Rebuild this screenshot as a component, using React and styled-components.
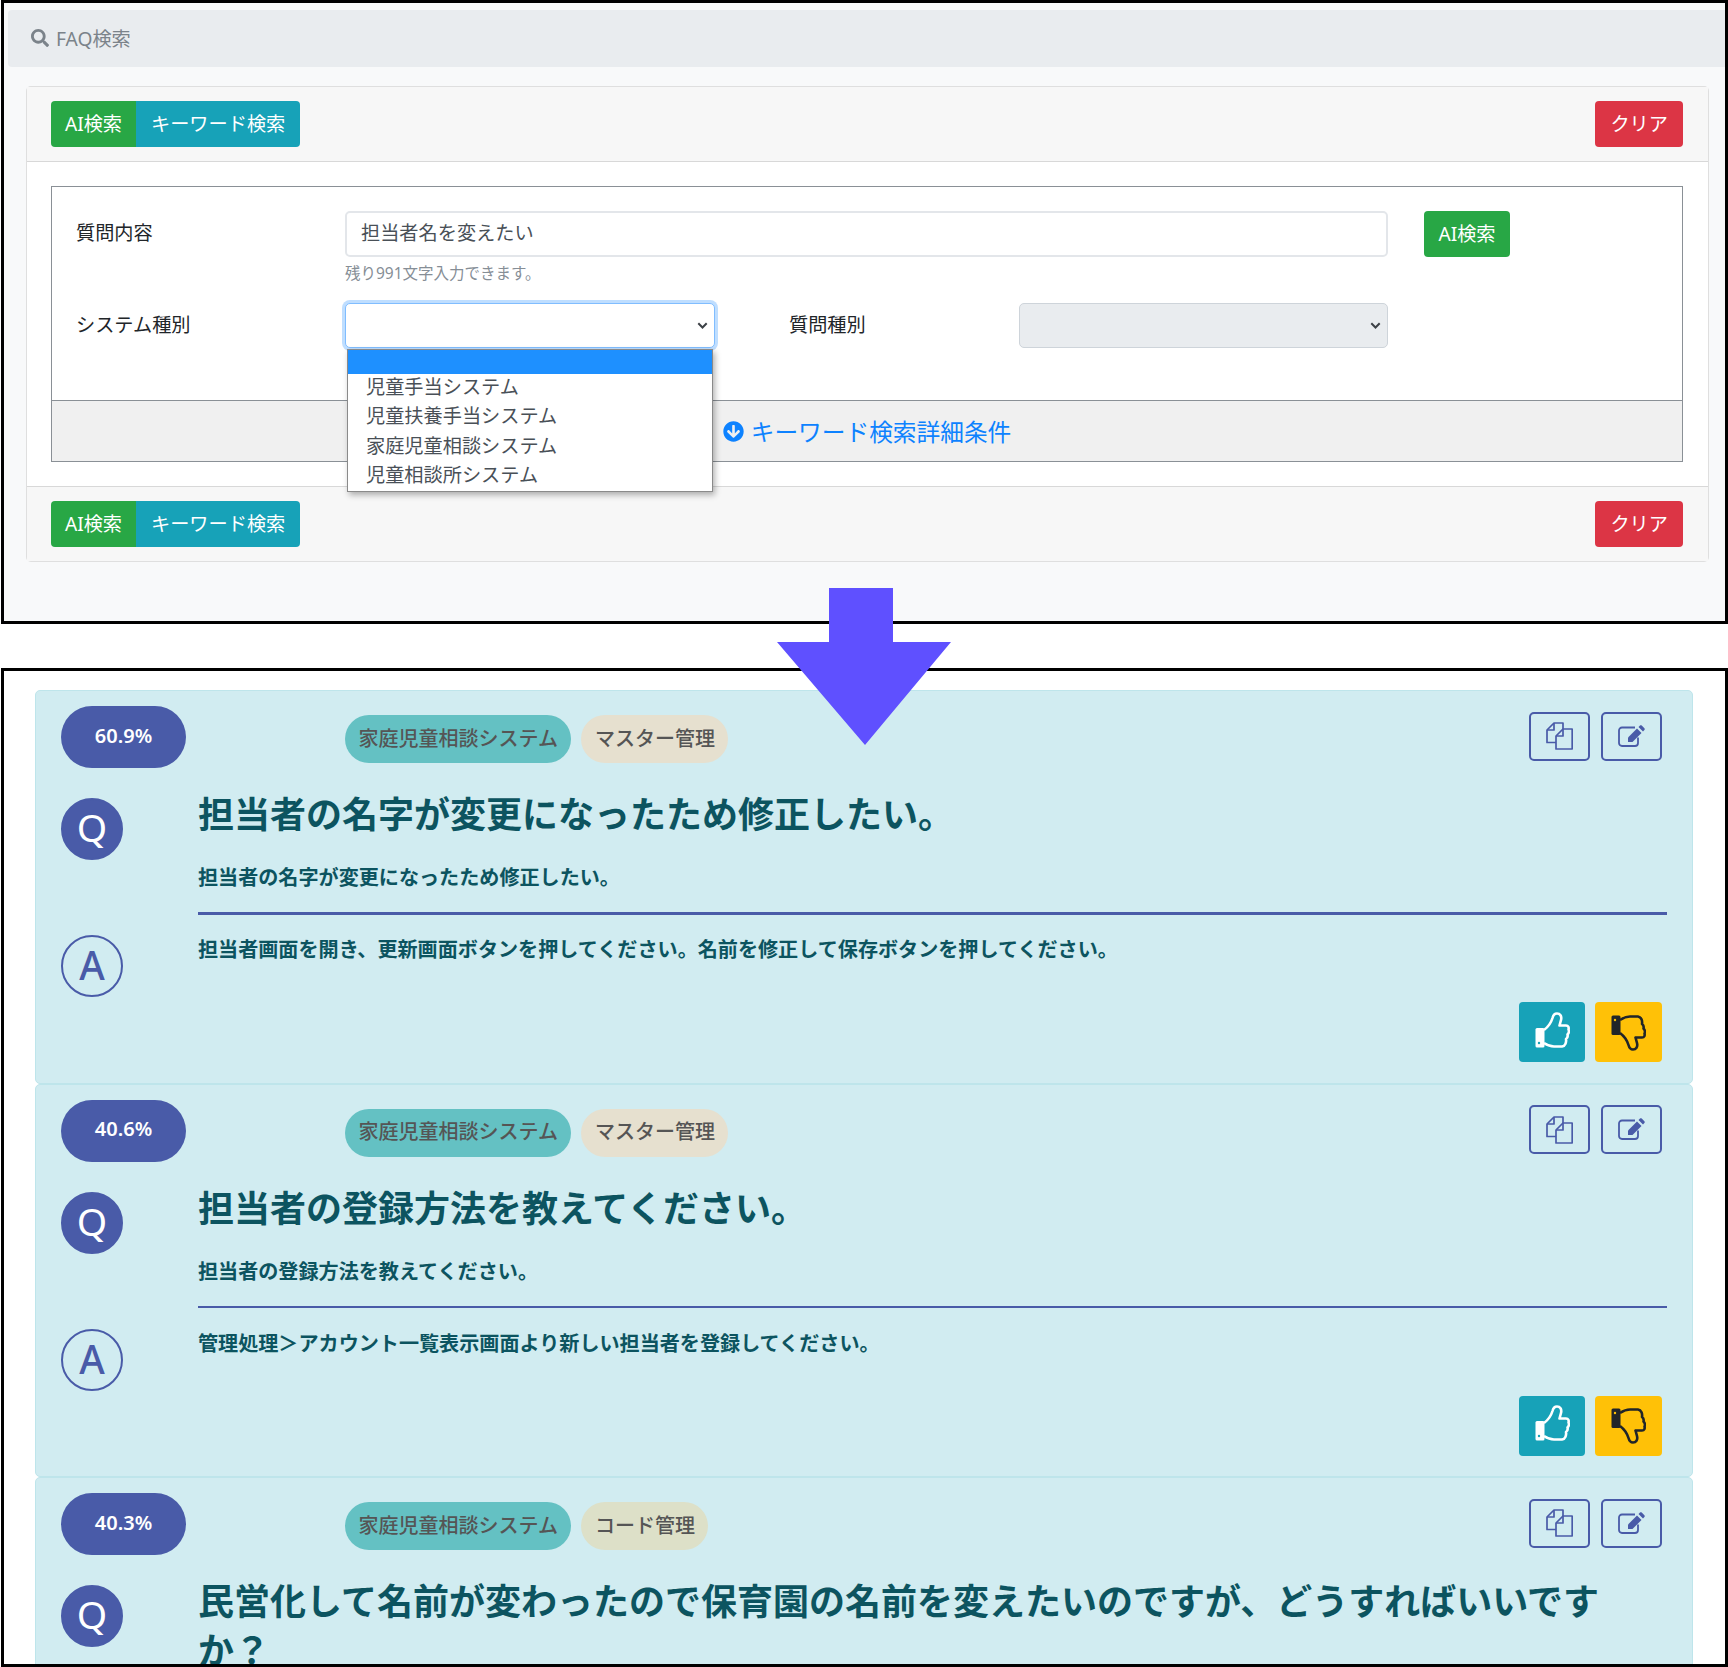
import styled, { createGlobalStyle } from "styled-components";
import { FaArrowCircleDown, FaSearch } from "react-icons/fa";

const fontStack = `"Noto Sans", "Noto Sans CJK JP", sans-serif`;

const Colors = {
  Green: "#28a745",
  Teal: "#17a2b8",
  Red: "#dc3545",
  Yellow: "#ffc107",
  Indigo: "#495ba8",
  Text: "#495057",
  Heading: "#0c5460",
};

const chevron = encodeURIComponent(
  `<svg xmlns="http://www.w3.org/2000/svg" width="11" height="7" viewBox="0 0 11 7"><path d="M1.3 1.3 5.5 5.5 9.7 1.3" fill="none" stroke="#3c4146" stroke-width="2"/></svg>`
);

const GlobalStyle = createGlobalStyle`
  html, body {
    margin: 0;
    padding: 0;
    background: #fff;
    overflow: hidden;
  }
  body {
    font-family: ${fontStack};
    font-size: 19.2px;
    color: #212529;
  }
  * { box-sizing: border-box; }
`;

const Page = styled.div`
  position: relative;
  width: 1728px;
  height: 1667px;
  padding-left: 1px;
  overflow: hidden;
`;

const SearchPanel = styled.section`
  height: 624px;
  border: 3px solid #000;
  background: #f8f9fa;
  padding-top: 7px;
  margin-bottom: 44px;
`;

const Breadcrumb = styled.div`
  display: flex;
  align-items: center;
  gap: 7px;
  height: 57px;
  margin: 0 0 19px 4px;
  padding: 0 0 2px 23px;
  background: #e9ecef;
  border-radius: 4px 0 0 4px;
  color: #7b838a;
`;

const SearchCard = styled.div`
  margin: 0 16px 0 22px;
  border: 1px solid rgba(0, 0, 0, 0.125);
  border-radius: 5px;
  background: #fff;
`;

const CardBar = styled.div`
  display: flex;
  justify-content: space-between;
  padding: 14px 25px 14px 24px;
  background: #f7f7f7;
  border-${(p) => (p.$bottom ? "top" : "bottom")}: 1px solid rgba(0, 0, 0, 0.125);
`;

const BtnGroup = styled.div`
  display: flex;
`;

const Btn = styled.button`
  width: ${(p) => (p.$width ? `${p.$width}px` : "auto")};
  height: 46px;
  padding: 0 ${(p) => (p.$width ? 0 : 15)}px 3px;
  border: 0;
  border-radius: ${(p) => p.$radius || "4px"};
  background: ${(p) => p.$bg};
  color: #fff;
  font: inherit;
  white-space: nowrap;
`;

const CardBody = styled.div`
  padding: 24px 25px 24px 24px;
`;

const FormBox = styled.div`
  height: 276px;
  border: 1px solid #8a9096;
  display: flex;
  flex-direction: column;
`;

const FormFields = styled.div`
  height: 213px;
  padding: 24px 24px 0;
`;

const FieldRow = styled.div`
  display: flex;
  align-items: center;
`;

const FieldLabel = styled.label`
  flex: none;
  width: ${(p) => p.$width}px;
  margin-left: ${(p) => p.$offset || 0}px;
  padding-bottom: 4px;
  color: #212529;
`;

const TextInput = styled.input`
  width: 1043px;
  height: 46px;
  margin-right: 36px;
  padding: 0 14px 4px;
  border: 2px solid #e3e6ea;
  border-radius: 5px;
  background: #fff;
  color: ${Colors.Text};
  font: inherit;
  outline: none;
`;

const Hint = styled.small`
  display: block;
  margin: 5px 0 17px 269px;
  height: 24px;
  line-height: 22px;
  font-size: 15.5px;
  color: #868e96;
`;

const SelectWrap = styled.div`
  position: relative;
  width: ${(p) => p.$width}px;
`;

const Select = styled.select`
  display: block;
  width: 100%;
  height: 45px;
  padding: 0 14px;
  appearance: none;
  border: 1px solid ${(p) => (p.$focus ? "#80bdff" : "#ced4da")};
  border-radius: 5px;
  background: ${(p) => (p.disabled ? "#e9ecef" : "#fff")} url("data:image/svg+xml,${chevron}") no-repeat right 6px center;
  box-shadow: ${(p) => (p.$focus ? "0 0 0 3px rgba(0, 123, 255, 0.25)" : "none")};
  color: ${Colors.Text};
  font: inherit;
  opacity: 1;
  outline: none;
`;

const OptionList = styled.ul`
  position: absolute;
  z-index: 2;
  top: 46px;
  left: 2px;
  width: 366px;
  height: 143px;
  margin: 0;
  padding: 0;
  list-style: none;
  background: #fff;
  border: 1px solid #8a8a8a;
  box-shadow: 2px 3px 6px rgba(0, 0, 0, 0.3);
`;

const OptionItem = styled.li`
  height: ${(p) => (p.$active ? "24px" : "29.3px")};
  line-height: 25px;
  padding-left: 18px;
  color: ${Colors.Text};
  background: ${(p) => (p.$active ? "#1e90ff" : "transparent")};
`;

const DetailToggle = styled.div`
  flex: 1;
  display: flex;
  align-items: center;
  justify-content: center;
  gap: 7px;
  background: #f0f0f0;
  border-top: 1px solid #8a9096;
  color: #0d82ff;
  font-size: 23.7px;
`;

const ResultsPanel = styled.section`
  height: 999px;
  border: 3px solid #000;
  background: #fff;
  padding: 19px 32px 0 31px;
  overflow: hidden;
`;

const ResultCard = styled.article`
  padding: 15px 30px 20.5px 25px;
  background: #d1ecf1;
  border: 1px solid #bee5eb;
  border-radius: 5px;
  font-size: 20.1px;
`;

const TopRow = styled.div`
  display: flex;
  align-items: center;
  margin-bottom: 22px;
`;

const ScorePill = styled.div`
  flex: none;
  width: 125px;
  height: 62px;
  padding-bottom: 4px;
  display: flex;
  align-items: center;
  justify-content: center;
  border-radius: 31px;
  background: ${Colors.Indigo};
  color: #fff;
  font-weight: 600;
  font-size: 20px;
`;

const TagList = styled.div`
  display: flex;
  gap: 10px;
  margin: 4px 0 0 159px;
`;

const Tag = styled.span`
  height: 48px;
  padding: 0 13.5px 4px;
  display: flex;
  align-items: center;
  border-radius: 24px;
  background: ${(p) => p.$bg};
  color: #555;
  font-weight: 500;
  font-size: 20px;
`;

const ToolButtons = styled.div`
  display: flex;
  gap: 11px;
  margin: 0 0 2px auto;
`;

const ToolButton = styled.button`
  width: 61px;
  height: 49px;
  display: flex;
  align-items: center;
  justify-content: center;
  padding: 0;
  border: 2px solid ${Colors.Indigo};
  border-radius: 5px;
  background: transparent;
  color: ${Colors.Indigo};
`;

const QaRow = styled.div`
  display: grid;
  grid-template-columns: 62px 1fr;
  column-gap: 75px;
`;

const QaBadge = styled.div`
  width: 62px;
  height: 62px;
  margin-top: ${(p) => (p.$filled ? "8px" : "0")};
  padding-bottom: ${(p) => (p.$filled ? "5px" : "3px")};
  display: flex;
  align-items: center;
  justify-content: center;
  border-radius: 50%;
  border: 2.5px solid ${Colors.Indigo};
  background: ${(p) => (p.$filled ? Colors.Indigo : "transparent")};
  color: ${(p) => (p.$filled ? "#fff" : Colors.Indigo)};
  font-size: 39px;
  font-weight: ${(p) => (p.$filled ? 400 : 500)};
`;

const Title = styled.h3`
  margin: 0;
  font-size: 36px;
  line-height: 49px;
  font-weight: 700;
  color: ${Colors.Heading};
`;

const BodyText = styled.p`
  margin: ${(p) => p.$top}px 0 0;
  line-height: 28px;
  font-weight: 700;
  color: ${Colors.Heading};
`;

const Divider = styled.hr`
  height: ${(p) => p.$weight}px;
  margin: 20px -5px ${(p) => 23 - p.$weight}px 0;
  border: 0;
  background: ${Colors.Indigo};
`;

const VoteRow = styled.div`
  display: flex;
  justify-content: flex-end;
  gap: 10px;
  margin-top: 5px;
`;

const VoteButton = styled.button`
  width: ${(p) => p.$width}px;
  height: 60px;
  display: flex;
  align-items: center;
  justify-content: center;
  padding: 0;
  border: 0;
  border-radius: 4px;
  background: ${(p) => p.$bg};
`;

const ThumbSvg = styled.svg`
  color: ${(p) => p.$color};
  margin-bottom: ${(p) => (p.$down ? 0 : 4)}px;
  transform: ${(p) => (p.$down ? "scaleY(-1)" : "none")};
`;

const ArrowOverlay = styled.svg`
  position: absolute;
  left: 777px;
  top: 588px;
  z-index: 3;
`;

function CopyIcon() {
  return (
    <svg width="27" height="28" viewBox="0 0 27 28" fill="none" stroke="currentColor" strokeWidth="1.7" strokeLinejoin="round">
      <path d="M10 20.5H1V8l7-7h9v6" />
      <path d="M8 1v7H1" />
      <path d="M10 27V14l7-7h9.2v20z" />
      <path d="M17 7v7h-7" />
    </svg>
  );
}

function EditIcon() {
  return (
    <svg width="27" height="23" viewBox="0 0 27 23">
      <path d="M20 12.5V18a3 3 0 0 1-3 3H4a3 3 0 0 1-3-3V5.5a3 3 0 0 1 3-3h13" fill="none" stroke="currentColor" strokeWidth="1.8" />
      <path d="M10 12.5 19 3.5l4.5 4.5-9 9H10z" fill="currentColor" />
      <path d="M20.5 2 22 .6c.5-.5 1.2-.5 1.7 0l2.7 2.7c.5.5.5 1.2 0 1.7L25 6.5z" fill="currentColor" />
    </svg>
  );
}

function ThumbIcon({ color, dot, down }) {
  return (
    <ThumbSvg $color={color} $down={down} width="35" height="37" viewBox="0 0 35 37" fill="none">
      <rect x="0.5" y="16" width="9" height="19.5" rx="1.5" fill="currentColor" />
      <circle cx="4" cy="31" r="1.2" fill={dot} />
      <path
        d="M9 18C13 15 16 11 17.5 6 18.5 2 20 1.5 22 1.5 25 1.5 27 4 26 8L24.5 13.5H31C33.5 13.5 34 15.5 33.5 17.5 34.5 19.5 33.5 21.5 32.5 22.5 33 24.5 32.5 26 31 27 31.5 30 30.5 34 27 34.5H19C15 34.5 12 33 9 31"
        stroke="currentColor"
        strokeWidth="2.6"
        strokeLinejoin="round"
      />
    </ThumbSvg>
  );
}

const CategoryOptions = ["児童手当システム", "児童扶養手当システム", "家庭児童相談システム", "児童相談所システム"];

const Results = [
  {
    Id: 1,
    Score: "60.9%",
    Category: "マスター管理",
    CategoryBg: "#e6e0cf",
    Title: "担当者の名字が変更になったため修正したい。",
    Question: "担当者の名字が変更になったため修正したい。",
    Answer: "担当者画面を開き、更新画面ボタンを押してください。名前を修正して保存ボタンを押してください。",
    Rule: 3,
  },
  {
    Id: 2,
    Score: "40.6%",
    Category: "マスター管理",
    CategoryBg: "#e6e0cf",
    Title: "担当者の登録方法を教えてください。",
    Question: "担当者の登録方法を教えてください。",
    Answer: "管理処理＞アカウント一覧表示画面より新しい担当者を登録してください。",
    Rule: 2,
  },
  {
    Id: 3,
    Score: "40.3%",
    Category: "コード管理",
    CategoryBg: "#dde0c8",
    Title: "民営化して名前が変わったので保育園の名前を変えたいのですが、どうすればいいですか？",
    Question: "",
    Answer: "",
    Rule: 2,
  },
];

function SearchBar({ bottom }) {
  return (
    <CardBar $bottom={bottom}>
      <BtnGroup>
        <Btn $bg={Colors.Green} $radius="4px 0 0 4px" $width={85}>AI検索</Btn>
        <Btn $bg={Colors.Teal} $radius="0 4px 4px 0">キーワード検索</Btn>
      </BtnGroup>
      <Btn $bg={Colors.Red}>クリア</Btn>
    </CardBar>
  );
}

function ResultItem({ item }) {
  return (
    <ResultCard>
      <TopRow>
        <ScorePill>{item.Score}</ScorePill>
        <TagList>
          <Tag $bg="#64c1c3">家庭児童相談システム</Tag>
          <Tag $bg={item.CategoryBg}>{item.Category}</Tag>
        </TagList>
        <ToolButtons>
          <ToolButton aria-label="copy"><CopyIcon /></ToolButton>
          <ToolButton aria-label="edit"><EditIcon /></ToolButton>
        </ToolButtons>
      </TopRow>
      <QaRow>
        <QaBadge $filled>Q</QaBadge>
        <div>
          <Title>{item.Title}</Title>
          <BodyText $top={25}>{item.Question}</BodyText>
          <Divider $weight={item.Rule} />
        </div>
      </QaRow>
      <QaRow>
        <QaBadge>A</QaBadge>
        <BodyText $top={1}>{item.Answer}</BodyText>
      </QaRow>
      <VoteRow>
        <VoteButton $bg={Colors.Teal} $width={66} aria-label="good">
          <ThumbIcon color="#fff" dot={Colors.Teal} />
        </VoteButton>
        <VoteButton $bg={Colors.Yellow} $width={67} aria-label="bad">
          <ThumbIcon color="#212529" dot={Colors.Yellow} down />
        </VoteButton>
      </VoteRow>
    </ResultCard>
  );
}

export default function App() {
  return (
    <Page>
      <GlobalStyle />
      <SearchPanel>
        <Breadcrumb>
          <FaSearch size={18} />
          FAQ検索
        </Breadcrumb>
        <SearchCard>
          <SearchBar />
          <CardBody>
            <FormBox>
              <FormFields>
                <FieldRow>
                  <FieldLabel $width={269}>質問内容</FieldLabel>
                  <TextInput defaultValue="担当者名を変えたい" />
                  <Btn $bg={Colors.Green} $width={86}>AI検索</Btn>
                </FieldRow>
                <Hint>残り991文字入力できます。</Hint>
                <FieldRow>
                  <FieldLabel $width={269}>システム種別</FieldLabel>
                  <SelectWrap $width={370}>
                    <Select $focus><option></option></Select>
                    <OptionList>
                      <OptionItem $active />
                      {CategoryOptions.map((name) => (
                        <OptionItem key={name}>{name}</OptionItem>
                      ))}
                    </OptionList>
                  </SelectWrap>
                  <FieldLabel $width={230} $offset={74}>質問種別</FieldLabel>
                  <SelectWrap $width={369}>
                    <Select disabled><option></option></Select>
                  </SelectWrap>
                </FieldRow>
              </FormFields>
              <DetailToggle>
                <FaArrowCircleDown size={21} />
                キーワード検索詳細条件
              </DetailToggle>
            </FormBox>
          </CardBody>
          <SearchBar bottom />
        </SearchCard>
      </SearchPanel>
      <ResultsPanel>
        {Results.map((item) => (
          <ResultItem key={item.Id} item={item} />
        ))}
      </ResultsPanel>
      <ArrowOverlay width="174" height="157" viewBox="0 0 174 157">
        <polygon points="52,0 116,0 116,54 174,54 88,157 0,54 52,54" fill="#5f50ff" />
      </ArrowOverlay>
    </Page>
  );
}
